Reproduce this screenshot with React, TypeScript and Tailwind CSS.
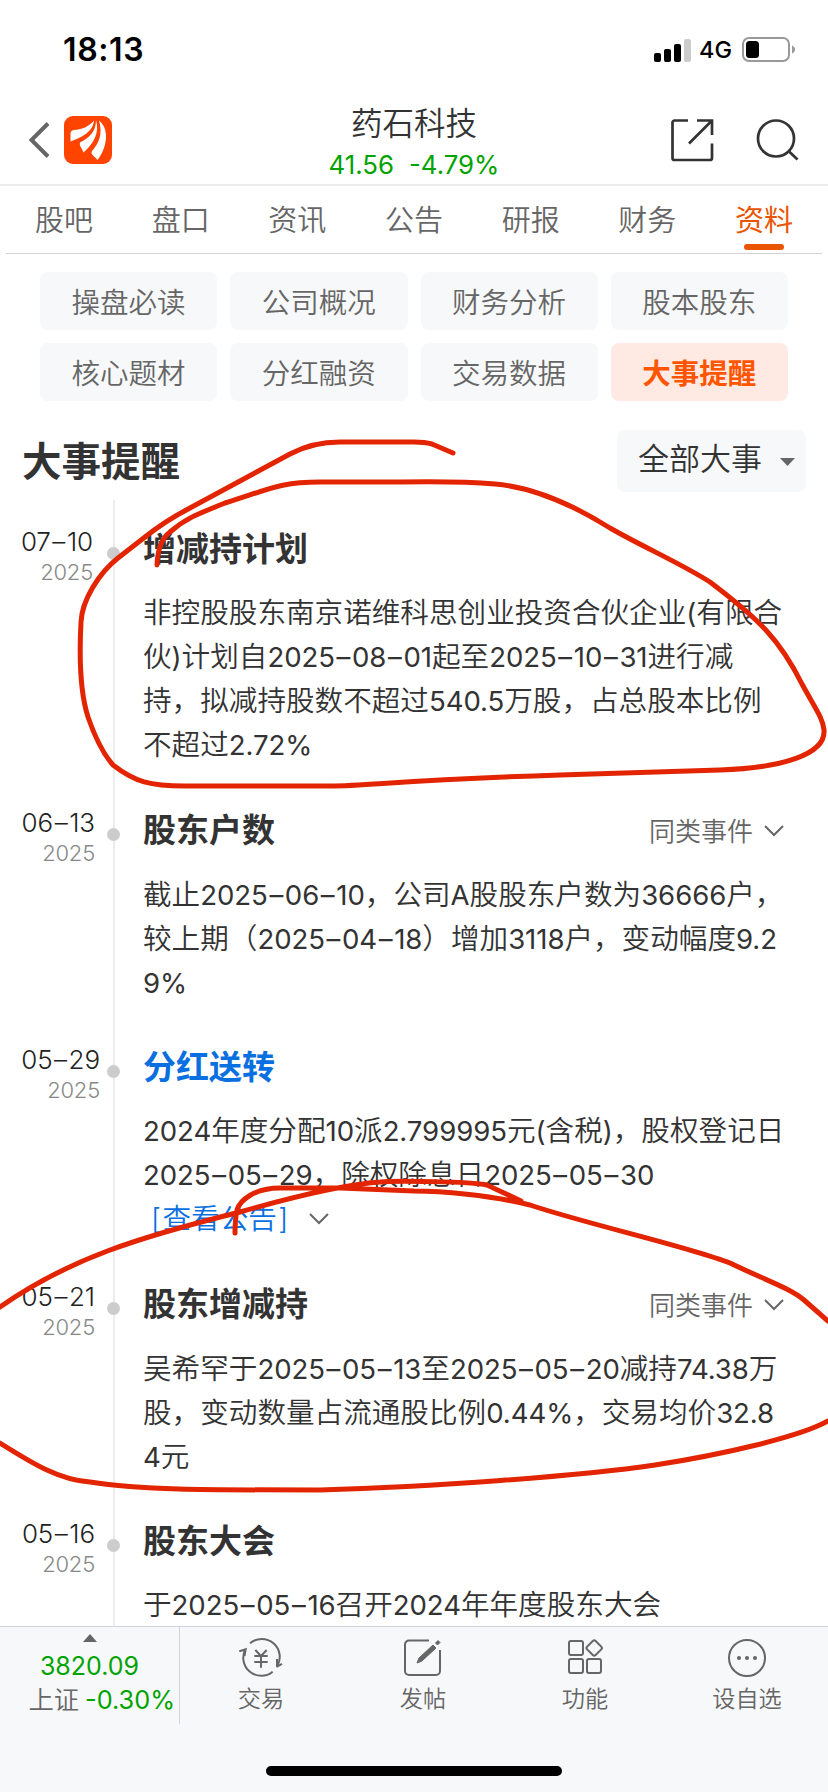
import { ReactNode } from 'react'

const tabs = ['股吧', '盘口', '资讯', '公告', '研报', '财务', '资料']
const sections = ['操盘必读', '公司概况', '财务分析', '股本股东', '核心题材', '分红融资', '交易数据', '大事提醒']

type Event = {
  date: string
  title: string
  lines: string[]
  height: string
  dateWidth: string
  similar?: boolean
  link?: boolean
}

const events: Event[] = [
  {
    date: '07–10',
    title: '增减持计划',
    lines: [
      '非控股股东南京诺维科思创业投资合伙企业(有限合',
      '伙)计划自2025–08–01起至2025–10–31进行减',
      '持，拟减持股数不超过540.5万股，占总股本比例',
      '不超过2.72%',
    ],
    height: 'h-[281px]',
    dateWidth: 'w-[93px]',
  },
  {
    date: '06–13',
    title: '股东户数',
    lines: [
      '截止2025–06–10，公司A股股东户数为36666户，',
      '较上期（2025–04–18）增加3118户，变动幅度9.2',
      '9%',
    ],
    height: 'h-[237px]',
    dateWidth: 'w-[95px]',
    similar: true,
  },
  {
    date: '05–29',
    title: '分红送转',
    lines: [
      '2024年度分配10派2.799995元(含税)，股权登记日',
      '2025–05–29，除权除息日2025–05–30',
    ],
    height: 'h-[237px]',
    dateWidth: 'w-[100px]',
    link: true,
  },
  {
    date: '05–21',
    title: '股东增减持',
    lines: [
      '吴希罕于2025–05–13至2025–05–20减持74.38万',
      '股，变动数量占流通股比例0.44%，交易均价32.8',
      '4元',
    ],
    height: 'h-[237px]',
    dateWidth: 'w-[95px]',
    similar: true,
  },
  {
    date: '05–16',
    title: '股东大会',
    lines: ['于2025–05–16召开2024年年度股东大会'],
    height: 'h-[120px]',
    dateWidth: 'w-[95px]',
  },
]

// Dashes take the full width of a digit
function Digits({ text }: { text: string }) {
  return (
    <>
      {text.split(/(–)/).map((part, i) =>
        part === '–' ? <span key={i} className="inline-block w-[0.62em] text-center tracking-normal">–</span> : part
      )}
    </>
  )
}

// Digits are set a little smaller and heavier than the Chinese text around them
function Line({ text }: { text: string }) {
  return (
    <p className="whitespace-nowrap">
      {text.split(/([0-9A-Za-z.%–()]+)/).map((part, i) =>
        i % 2 ? <span key={i} className="text-[27.6px] font-normal tracking-[-0.080px]"><Digits text={part} /></span> : part
      )}
    </p>
  )
}

function Chevron() {
  return (
    <svg width="20" height="12" viewBox="0 0 20 12" fill="none" stroke="#666" strokeWidth="2">
      <path d="M1 1l9 9 9-9" />
    </svg>
  )
}

function StatusBar() {
  return (
    <div className="flex h-[92px] items-start justify-between pl-[63px] pr-[32px]">
      <span className="mt-[31px] text-[32px] leading-[38px] font-semibold tracking-[0.6px] text-black">18:13</span>
      <div className="mt-[37px] flex items-center">
        <svg width="37" height="24" viewBox="0 0 37 24">
          <rect x="0" y="15" width="7" height="9" rx="2" />
          <rect x="10" y="11" width="7" height="13" rx="2" />
          <rect x="20" y="6" width="7" height="18" rx="2" />
          <rect x="30" y="1" width="7" height="23" rx="2" fill="#ccc" />
        </svg>
        <span className="ml-[8px] w-[34px] text-[23.500px] leading-6 font-medium text-black">4G</span>
        <svg className="ml-[9px]" width="54" height="26" viewBox="0 0 54 26">
          <rect x="1" y="1" width="46" height="23" rx="6" fill="none" stroke="#999" strokeWidth="2" />
          <rect x="4" y="4" width="13" height="17" rx="3.5" />
          <path d="M50 8.500c4 1.500 4 6.500 0 8z" fill="#999" />
        </svg>
      </div>
    </div>
  )
}

function Header() {
  return (
    <header className="flex h-[94px] items-start justify-between border-b-2 border-[#ececec] px-7">
      <div className="mt-[24px] flex w-[170px] items-center">
        <svg width="22" height="36" viewBox="0 0 22 36" fill="none" stroke="#666" strokeWidth="4">
          <path d="M20 1.500L3.500 18l16.500 16.500" />
        </svg>
        <svg className="ml-[14px]" width="48" height="48" viewBox="0 0 48 48">
          <rect width="48" height="48" rx="9" fill="#ff4400" />
          <g fill="#fff">
            <path d="M6.500 17C7 14 10 14 14 13.500C21 12.500 26 9 30 4.500C29 16 18 21 6.500 25.500z" />
            <path d="M32 4C36 17 29 28 19.500 36.500C18 32 15 30 16 26.500C25 22 32 16 32 4z" />
            <path d="M35 4.500C46 13 43 32 33.500 44C31 40 26 39 28 35C35 27 39 18 35 4.500z" />
          </g>
        </svg>
      </div>
      <div className="flex flex-col items-center">
        <h1 className="mt-[10px] text-[31.500px] leading-[44px] text-[#333]">药石科技</h1>
        <div className="mt-[3px] flex gap-[15px] text-[25.800px] leading-8 font-normal text-[#00a300]">
          <span>41.56</span>
          <span>-4.79%</span>
        </div>
      </div>
      <div className="mt-[26px] flex w-[170px] justify-end gap-[42px]">
        <svg width="44" height="44" viewBox="0 0 44 44" fill="none" stroke="#333" strokeWidth="2.700">
          <path d="M18 2.500H4.500a2 2 0 0 0-2 2V40a2 2 0 0 0 2 2H40a2 2 0 0 0 2-2V25.500M27 2.500h15V17M42 2.500L19 25.500" />
        </svg>
        <svg width="44" height="44" viewBox="0 0 44 44" fill="none" stroke="#333" strokeWidth="2.700">
          <circle cx="20" cy="20.500" r="18" />
          <path d="M32.500 33l9 8.500" />
        </svg>
      </div>
    </header>
  )
}

function EventRow({ event }: { event: Event }) {
  return (
    <section className={`flex ${event.height}`}>
      <div className={`shrink-0 text-right ${event.dateWidth}`}>
        <div className="text-[26px] leading-8 tracking-[-0.1px] text-[#222]"><Digits text={event.date} /></div>
        <div className="text-[22px] leading-7 tracking-[-0.2px] text-[#888]">2025</div>
      </div>
      <div className="relative ml-auto w-[685px] shrink-0 pt-[3px]">
        <span className="absolute top-[21px] -left-[36px] size-[13px] rounded-full bg-[#ccc]" />
        <div className="flex h-10 items-center justify-between pr-[44px]">
          <h3 className={`text-[33px] font-bold leading-10 ${event.link ? 'text-[#0a6fe0]' : 'text-[#333]'}`}>{event.title}</h3>
          {event.similar && (
            <span className="flex items-center gap-[11px] pt-[2px] text-[26px] text-[#666]">
              同类事件
              <Chevron />
            </span>
          )}
        </div>
        <div className={`text-[28.600px] leading-[44px] text-[#333] ${event.similar ? 'mt-[23px]' : 'mt-[22px]'}`}>
          {event.lines.map(line => <Line key={line} text={line} />)}
          {event.link && (
            <p className="flex items-center gap-[21px] pl-[8px] text-[#0a6fe0]">
              <span>[<span className="mx-[1.5px]">查看公告</span>]</span>
              <Chevron />
            </p>
          )}
        </div>
      </div>
    </section>
  )
}

function BarItem({ label, children }: { label: string; children: ReactNode }) {
  return (
    <div className="flex flex-1 flex-col items-center pt-[10px]">
      <svg width="44" height="42" viewBox="0 0 44 42" fill="none" stroke="#666" strokeWidth="2">{children}</svg>
      <span className="mt-[4px] text-[23.200px] leading-8 text-[#666]">{label}</span>
    </div>
  )
}

function BottomBar() {
  return (
    <footer className="relative h-[166px] shrink-0 border-t border-[#cfd3dc] bg-[#f7f8fa]">
      <div className="flex">
        <div className="flex h-[97px] w-[180px] flex-col items-center border-r border-[#cfd3dc]">
          <svg className="mt-[7px]" width="14" height="8" viewBox="0 0 14 8"><path d="M0 8l7-8 7 8z" fill="#666" /></svg>
          <span className="mt-[8px] text-[25px] leading-8 font-normal text-[#00a300]">3820.09</span>
          <div className="flex items-center gap-[6px] self-end pr-[4px] text-[25.300px] leading-[36px] text-[#00a300]">
            <span className="text-[#666]">上证</span>
            <span className="font-normal">-0.30%</span>
          </div>
        </div>
        <BarItem label="交易">
          <path d="M11 6.300A18 18 0 0 1 38 29.500L37.500 30L43 26.800M38 29.500V22M33.700 34.700A18 18 0 0 1 6.300 12.500L0.300 14.300M6.700 12L5.500 19" />
          <path d="M16.300 13l5.700 6 5.700-6M15.300 19h13.400M15.300 25h13.400M22 19v11.700" />
        </BarItem>
        <BarItem label="发帖">
          <path d="M28 3.500H8a4 4 0 0 0-4 4V34a4 4 0 0 0 4 4h27a4 4 0 0 0 4-4V13" />
          <path d="M16 26l2-5L32 8l3 3-14 13zM34.500 6l2.500-2.500 2 2L36.500 8z" fill="#666" strokeWidth="1" />
        </BarItem>
        <BarItem label="功能">
          <rect x="6" y="4" width="14" height="14" rx="2" />
          <rect x="6" y="22" width="14" height="14" rx="2" />
          <rect x="24" y="22" width="14" height="14" rx="2" />
          <rect x="25.200" y="5" width="12" height="12" rx="2" transform="rotate(45 31.200 11)" />
        </BarItem>
        <BarItem label="设自选">
          <circle cx="22" cy="21" r="18" />
          <g fill="#666" stroke="none">
            <circle cx="14" cy="21" r="2" />
            <circle cx="22" cy="21" r="2" />
            <circle cx="30" cy="21" r="2" />
          </g>
        </BarItem>
      </div>
      <div className="absolute top-[139px] left-[266px] h-[10px] w-[296px] rounded-full bg-black" />
    </footer>
  )
}

// Freehand pen marks drawn over the page
function PenMarks() {
  return (
    <svg className="pointer-events-none absolute inset-0" width="828" height="1792" viewBox="0 0 828 1792" fill="none" stroke="#e32400" strokeWidth="5" strokeLinecap="round">
      <path d="M453 453L432 444Q425 442 414 442H340C320 442 305 446 290 454L190 508Q165 521 145 537L118 558C99 573 82 600 81 622C79 660 80 692 88 717C97 743 106 757 113 765C135 782 150 786 185 786H330C370 786 400 780 560 775L720 770C780 768 826 755 824 730C823 718 815 708 802 684C780 640 760 620 710 582C680 563 645 548 610 528C570 503 530 487 495 484Q460 481 400 482H320C280 482 270 489 225 503C195 515 185 519 170 532Q158 541 157 565" />
      <path d="M521 1201L487 1185C470 1181 390 1181 380 1182C350 1184 310 1192 240 1212C140 1237 70 1258 0 1307M0 1443C35 1465 60 1480 90 1482C140 1490 200 1490 320 1490C430 1487 580 1476 655 1465C720 1455 800 1437 828 1421M828 1321L804 1300C790 1288 765 1280 730 1263C690 1247 590 1225 530 1205C490 1195 440 1191 414 1191L340 1188H280C255 1188 240 1200 237 1210Q235 1220 235 1233" />
    </svg>
  )
}

export default function App() {
  return (
    <div className="relative flex h-[1792px] w-[828px] flex-col overflow-hidden bg-white font-[350] [font-family:'Inter','Noto_Sans_CJK_SC',sans-serif]">
      <StatusBar />
      <Header />
      <nav className="mx-[6px] flex h-[68px] shrink-0 justify-between border-b border-[#d3d3d6] px-[29px]">
        {tabs.map(tab => (
          <div key={tab} className={`flex flex-col items-center text-[29px] leading-[42px] ${tab === '资料' ? 'font-normal text-[#ea5504]' : 'text-[#666]'}`}>
            <span className="mt-[14px]">{tab}</span>
            {tab === '资料' && <span className="mt-[2px] h-[6px] w-10 rounded-full bg-[#ea5504]" />}
          </div>
        ))}
      </nav>
      <div className="mt-[18px] grid shrink-0 grid-cols-4 gap-[13px] px-10">
        {sections.map(name => (
          <div
            key={name}
            className={`flex h-[58px] items-center justify-center rounded-lg pt-[4px] text-[28.500px] ${name === '大事提醒' ? 'bg-[#ffeae3] font-bold text-[#ff5500]' : 'bg-[#f7f8fa] text-[#666]'}`}
          >
            {name}
          </div>
        ))}
      </div>
      <div className="mt-[29px] flex h-[62px] shrink-0 items-center justify-between pl-[22px] pr-[22px]">
        <h2 className="pt-[3px] text-[39.500px] font-bold text-[#333]">大事提醒</h2>
        <div className="flex h-[62px] w-[189px] items-center justify-between rounded-lg bg-[#f7f8fa] pb-[3px] pl-[21px] pr-[11px] text-[31px] text-[#333]">
          全部大事
          <svg className="mt-1" width="15" height="8" viewBox="0 0 15 8"><path d="M0 0h15L7.500 8z" fill="#666" /></svg>
        </div>
      </div>
      <main className="relative mt-[8px] min-h-0 flex-1 overflow-hidden pt-[26px]">
        <div className="absolute top-0 left-[113px] h-full w-[2px] bg-[#ececec]" />
        {events.map(event => <EventRow key={event.date} event={event} />)}
      </main>
      <BottomBar />
      <PenMarks />
    </div>
  )
}
